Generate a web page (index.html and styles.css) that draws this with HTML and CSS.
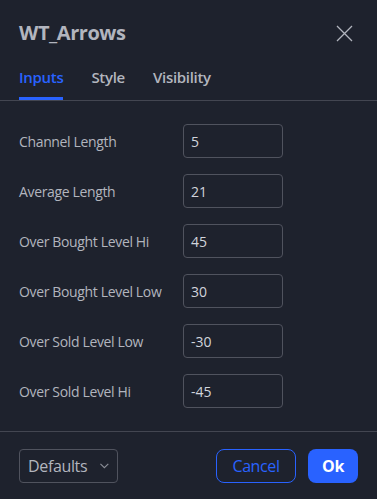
FILE: index.html
```html
<!DOCTYPE html>
<html>
<head>
<meta charset="utf-8">
<link rel="stylesheet" href="styles.css">
</head>
<body>
<div class="dialog">
  <div class="header">
    <div class="title">WT_Arrows</div>
    <button class="close" aria-label="Close">
      <svg width="17" height="17" viewBox="0 0 17 17"><path d="M1 1L16 16M16 1L1 16" stroke="#b2b5be" stroke-width="1.3" fill="none"/></svg>
    </button>
  </div>
  <div class="tabs">
    <div class="tab active">Inputs</div>
    <div class="tab">Style</div>
    <div class="tab">Visibility</div>
  </div>
  <div class="content">
    <div class="label">Channel Length</div><div class="input">5</div>
    <div class="label">Average Length</div><div class="input">21</div>
    <div class="label">Over Bought Level Hi</div><div class="input">45</div>
    <div class="label">Over Bought Level Low</div><div class="input">30</div>
    <div class="label">Over Sold Level Low</div><div class="input">-30</div>
    <div class="label">Over Sold Level Hi</div><div class="input">-45</div>
  </div>
  <div class="footer">
    <div class="select"><span>Defaults</span>
      <svg class="chev" width="10" height="6" viewBox="0 0 10 6"><path d="M0.5 0.5L5 5L9.5 0.5" stroke="#8a8d96" stroke-width="1.3" fill="none"/></svg>
    </div>
    <div class="spacer"></div>
    <button class="btn cancel">Cancel</button>
    <button class="btn ok">Ok</button>
  </div>
</div>
</body>
</html>
```
FILE: styles.css
```css
* { box-sizing: border-box; }
html, body {
  margin: 0;
  padding: 0;
  background: #1e222d;
}
body {
  font-family: "Open Sans", "Noto Sans", sans-serif;
  color: #b2b5be;
  width: 377px;
  height: 499px;
  overflow: hidden;
}
.dialog {
  display: flex;
  flex-direction: column;
  height: 499px;
}
.header {
  display: flex;
  align-items: center;
  justify-content: space-between;
  padding: 19px 24px 0 19px;
  height: 47px;
}
.title {
  font-size: 20px;
  line-height: 28px;
  font-weight: 700;
  letter-spacing: -0.45px;
  color: #b2b5be;
}
.close {
  background: none;
  border: 0;
  padding: 0;
  width: 17px;
  height: 17px;
  display: flex;
}
.tabs {
  display: flex;
  gap: 28px;
  padding: 0 19px;
  border-bottom: 1px solid #434651;
}
.tab {
  font-size: 15px;
  font-weight: 600;
  line-height: 20px;
  letter-spacing: -0.3px;
  padding: 20px 0 10px;
  border-bottom: 3px solid transparent;
  color: #b2b5be;
}
.tab.active {
  color: #2962ff;
  border-bottom-color: #2962ff;
}
.content {
  display: grid;
  grid-template-columns: 164px 100px;
  row-gap: 16px;
  padding: 23px 19px;
  align-items: center;
  border-bottom: 1px solid #434651;
}
.label {
  font-size: 14px;
  letter-spacing: -0.35px;
  color: #b2b5be;
}
.input {
  height: 34px;
  border: 1px solid #50535e;
  border-radius: 4px;
  padding: 0 7px;
  display: flex;
  align-items: center;
  font-size: 14px;
  color: #d1d4dc;
}
.footer {
  display: flex;
  align-items: center;
  padding: 17px 19px 16px 19px;
  gap: 12px;
}
.select {
  width: 99px;
  height: 34px;
  border: 1px solid #50535e;
  border-radius: 4px;
  display: flex;
  align-items: center;
  padding: 0 8px;
  font-size: 16px;
  letter-spacing: -0.35px;
  color: #b2b5be;
  gap: 13px;
}
.spacer { flex: 1; }
.btn {
  height: 34px;
  border-radius: 8px;
  font-family: inherit;
  font-size: 16px;
  letter-spacing: -0.4px;
  padding: 0;
}
.cancel {
  width: 80px;
  background: transparent;
  border: 1px solid #2962ff;
  color: #2962ff;
}
.ok {
  width: 50px;
  background: #2962ff;
  border: 0;
  color: #ffffff;
  font-weight: 700;
}
```
